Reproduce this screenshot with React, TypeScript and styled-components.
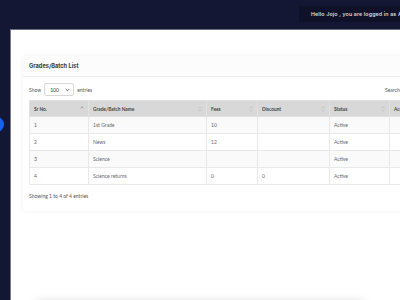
import React from 'react';
import styled, { createGlobalStyle } from 'styled-components';

const GlobalStyle = createGlobalStyle`
  html, body {
    margin: 0;
    padding: 0;
    background: #141734;
    overflow: hidden;
  }
`;

interface Row {
  sr: number;
  name: string;
  fees: string;
  discount: string;
  status: string;
}

const rows: Array<Row> = [
  { sr: 1, name: '1st Grade', fees: '10', discount: '', status: 'Active' },
  { sr: 2, name: 'News', fees: '12', discount: '', status: 'Active' },
  { sr: 3, name: 'Science', fees: '', discount: '', status: 'Active' },
  { sr: 4, name: 'Science returns', fees: '0', discount: '0', status: 'Active' },
];

const columns = [
  { label: 'Sr No.', width: 59, sorted: true },
  { label: 'Grade/Batch Name', width: 118 },
  { label: 'Fees', width: 51 },
  { label: 'Discount', width: 72 },
  { label: 'Status', width: 60 },
  { label: 'Action', width: 75 },
];

const SortIcon = ({ active }: { active?: boolean }) => (
  <SortMark>
    <svg width="4" height="6" viewBox="0 0 4 6">
      <path d="M0.5 2.3 L2 0.8 L3.5 2.3" fill="none" stroke={active ? '#777' : '#bbb'} strokeWidth="0.6" />
      {!active && <path d="M0.5 3.7 L2 5.2 L3.5 3.7" fill="none" stroke="#bbb" strokeWidth="0.6" />}
    </svg>
  </SortMark>
);

const App = () => (
  <>
    <GlobalStyle />
    <Page>
      <TopBar>
        <UserBox>Hello Jojo , you are logged in as Admin</UserBox>
      </TopBar>
      <Body>
        <Rail />
        <ToggleDot />
        <Main>
          <Card>
            <CardHeader>Grades/Batch List</CardHeader>
            <CardBody>
              <Controls>
                <Inline>
                  <Label>Show</Label>
                  <Select>
                    <span>100</span>
                    <svg width="5" height="4" viewBox="0 0 5 4">
                      <path d="M0.7 1 L2.5 2.8 L4.3 1" fill="none" stroke="#333" strokeWidth="0.7" />
                    </svg>
                  </Select>
                  <Label>entries</Label>
                </Inline>
                <Inline>
                  <Label>Search:</Label>
                  <SearchInput />
                </Inline>
              </Controls>
              <Table>
                <colgroup>
                  {columns.map((c) => (
                    <col key={c.label} style={{ width: c.width }} />
                  ))}
                </colgroup>
                <thead>
                  <tr>
                    {columns.map((c) => (
                      <Th key={c.label}>
                        {c.label}
                        <SortIcon active={c.sorted} />
                      </Th>
                    ))}
                  </tr>
                </thead>
                <tbody>
                  {rows.map((r, i) => (
                    <Tr key={r.sr} striped={i % 2 === 0}>
                      <Td>{r.sr}</Td>
                      <Td>{r.name}</Td>
                      <Td>{r.fees}</Td>
                      <Td>{r.discount}</Td>
                      <Td>{r.status}</Td>
                      <Td />
                    </Tr>
                  ))}
                </tbody>
              </Table>
              <Info>Showing 1 to 4 of 4 entries</Info>
            </CardBody>
          </Card>
          <FooterCard />
        </Main>
      </Body>
    </Page>
  </>
);

export default App;

const Page = styled.div`
  width: 400px;
  height: 300px;
  display: flex;
  flex-direction: column;
  overflow: hidden;
`;

const TopBar = styled.div`
  height: 29px;
  flex-shrink: 0;
  display: flex;
  justify-content: flex-end;
  align-items: flex-start;
  padding-top: 6px;
  box-sizing: border-box;
`;

const UserBox = styled.div`
  width: 101px;
  height: 16px;
  flex-shrink: 0;
  background: #0f1128;
  color: #e8e8f0;
  font-family: Inter, 'Noto Sans', sans-serif;
  font-size: 5.3px;
  letter-spacing: 0.15px;
  font-weight: 500;
  line-height: 16px;
  padding-left: 12px;
  box-sizing: border-box;
  white-space: nowrap;
  overflow: hidden;
`;

const Body = styled.div`
  position: relative;
  flex: 1;
  display: flex;
`;

const Rail = styled.div`
  width: 10px;
  flex-shrink: 0;
  background: #141734;
`;

const ToggleDot = styled.div`
  position: absolute;
  left: -11px;
  top: 88px;
  width: 15px;
  height: 15px;
  border-radius: 50%;
  background: #1463f0;
`;

const Main = styled.div`
  width: 490px;
  flex-shrink: 0;
  background: #fff;
  border-top: 1px solid #6c6e88;
  border-left: 1px solid #7a7c94;
  padding: 26px 0 0 12px;
  box-sizing: border-box;
`;

const Card = styled.div`
  width: 447px;
  background: #fff;
  box-shadow: 0 0 5px rgba(0, 0, 0, 0.06);
  border-radius: 2px;
`;

const CardHeader = styled.div`
  height: 21px;
  line-height: 20px;
  padding-left: 6px;
  background: #fcfcfc;
  border-bottom: 1px solid #ececec;
  box-sizing: border-box;
  font-family: Inter, 'Noto Sans', sans-serif;
  font-size: 5.7px;
  font-weight: 700;
  color: #3a3a3a;
`;

const CardBody = styled.div`
  padding: 6px 6px 12px;
  font-family: Lato, 'Open Sans', sans-serif;
  color: #555;
`;

const Controls = styled.div`
  display: flex;
  justify-content: space-between;
  align-items: center;
  height: 13px;
  margin-bottom: 4px;
`;

const Inline = styled.div`
  display: flex;
  align-items: center;
  gap: 3px;
`;

const Label = styled.span`
  font-size: 5px;
  color: #555;
`;

const Select = styled.div`
  width: 30px;
  height: 13px;
  box-sizing: border-box;
  border: 1px solid #d8d8d8;
  border-radius: 2px;
  display: flex;
  align-items: center;
  justify-content: space-between;
  padding: 0 3px 0 5px;
  font-size: 5px;
  color: #333;
`;

const SearchInput = styled.div`
  width: 60px;
  height: 13px;
  box-sizing: border-box;
  border: 1px solid #d8d8d8;
  border-radius: 2px;
`;

const Table = styled.table`
  width: 435px;
  border-collapse: collapse;
  table-layout: fixed;
`;

const Th = styled.th`
  position: relative;
  height: 15px;
  padding: 0 0 0 4px;
  background: #d8d8d8;
  border: 1px solid #e2e2e2;
  text-align: left;
  font-size: 4.8px;
  font-weight: 700;
  color: #444;
  white-space: nowrap;
  overflow: hidden;
`;

const SortMark = styled.span`
  position: absolute;
  right: 4px;
  top: 5px;
  line-height: 0;
`;

const Tr = styled.tr<{ striped?: boolean }>`
  background: ${(p) => (p.striped ? '#fafafa' : '#fff')};
`;

const Td = styled.td`
  height: 16px;
  padding: 0 0 0 4px;
  border: 1px solid #e8e8e8;
  font-size: 5px;
  color: #666;
`;

const Info = styled.div`
  margin-top: 8px;
  font-size: 5px;
  color: #555;
`;

const FooterCard = styled.div`
  width: 330px;
  height: 40px;
  margin: 90px 0 0 12px;
  background: #fff;
  box-shadow: 0 0 9px rgba(0, 0, 0, 0.14);
  border-radius: 4px;
`;
